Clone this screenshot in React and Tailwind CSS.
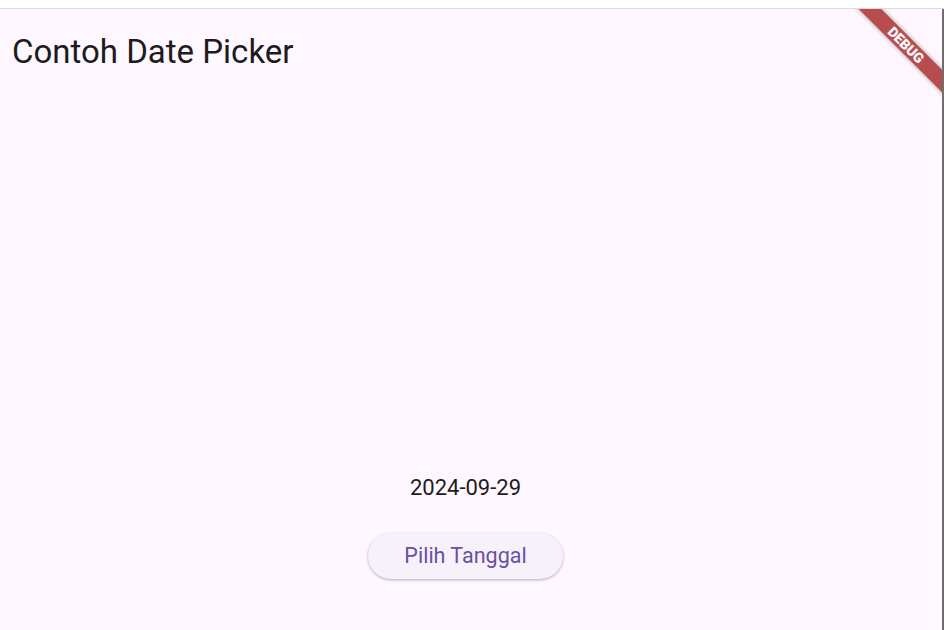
export default function App() {
  return (
    <div className="w-[944px] h-[630px] bg-white flex flex-col overflow-hidden" style={{ fontFamily: "Roboto, 'Noto Sans', sans-serif" }}>
      <div className="h-[8px] bg-white shrink-0" />
      <div className="h-[1px] bg-[#dcdcdc] shrink-0" />
      <div className="flex-1 flex flex-row min-h-0">
        <div className="relative flex-1 flex flex-col bg-[#fef7ff] overflow-hidden">
          <div className="pl-[12px] pt-[26px] text-[33px] leading-[33px] text-[#1d1b20]">Contoh Date Picker</div>
          <div className="flex-1" />
          <div className="flex flex-col items-center pb-[51px] pr-[11px]">
            <div className="text-[22px] leading-[28px] text-[#1d1b20]">2024-09-29</div>
            <button className="mt-[31px] h-[46px] px-[36px] rounded-full bg-[#f7f2fa] text-[#6750a4] text-[21.5px] leading-[28px] shadow-[0_1px_3px_rgba(0,0,0,0.3)]">
              Pilih Tanggal
            </button>
          </div>
          <div className="absolute left-[806px] top-[28px] w-[200px] h-[16px] bg-[#b84c4f] rotate-45 flex items-center justify-center shadow-[0_0_5px_rgba(0,0,0,0.35)]">
            <span className="text-white text-[14px] font-black leading-[16px]">DEBUG</span>
          </div>
        </div>
        <div className="w-[2px] bg-[#6f6f6f] shrink-0" />
      </div>
    </div>
  );
}
